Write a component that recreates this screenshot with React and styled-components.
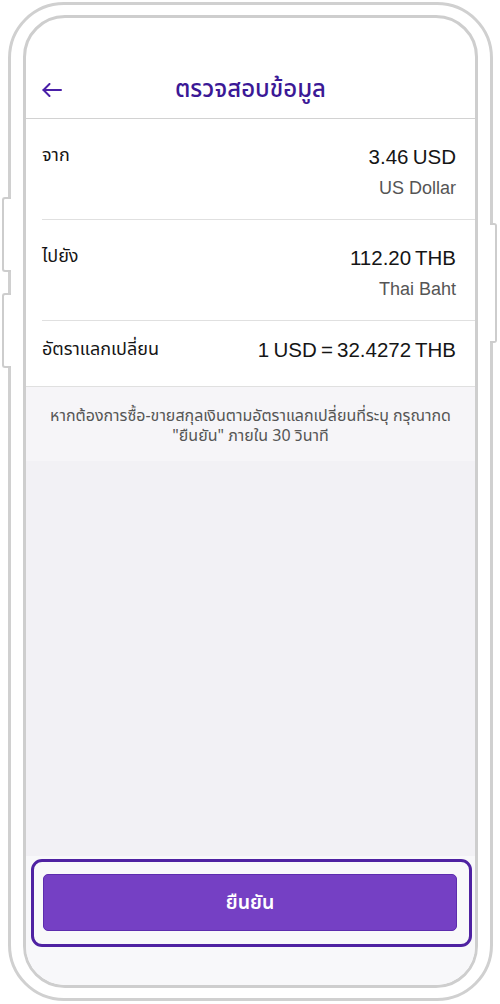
import React from 'react';
import styled, { createGlobalStyle } from 'styled-components';

const Global = createGlobalStyle`
  html, body { margin: 0; padding: 0; background: #fff; }
  body { font-family: "Noto Sans Thai", "Liberation Sans", "Noto Sans", sans-serif; }
  * { box-sizing: border-box; }
`;

const Device = styled.div`
  position: relative;
  width: 500px;
  height: 1004px;
  padding: 2px 7px 3px 8px;
`;

const Frame = styled.div`
  width: 485px;
  height: 999px;
  border: 3px solid #d0d0d0;
  border-radius: 56px;
  padding: 10px 12px 10px 12px;
  display: flex;
  background: #fff;
`;

const SideButton = styled.div`
  position: absolute;
  top: ${(p) => p.$top}px;
  height: ${(p) => p.$height}px;
  background: #fff;
  border: 2px solid #cdcdcd;
  ${(p) =>
    p.$right
      ? `left: 490px; width: 7px; border-left: none; border-radius: 0 3px 3px 0;`
      : `left: 2px; width: 9px; border-right: none; border-radius: 3px 0 0 3px;`}
`;

const Screen = styled.div`
  flex: 1;
  border: 3px solid #cecece;
  border-radius: 42px;
  overflow: hidden;
  display: flex;
  flex-direction: column;
  background: #fff;
`;

const Header = styled.header`
  height: 101px;
  display: grid;
  grid-template-columns: 1fr auto 1fr;
  align-items: end;
  padding: 0 16px 13px;
  border-bottom: 1px solid #d2d2d2;
`;

const BackButton = styled.button`
  justify-self: start;
  background: none;
  border: none;
  padding: 0;
  height: 30px;
  display: flex;
  align-items: center;
  color: #4a1fa8;
  cursor: pointer;
`;

const Title = styled.h1`
  margin: 0;
  font-size: 24px;
  line-height: 30px;
  font-weight: 500;
  color: #3b1896;
`;

const Row = styled.div`
  display: flex;
  justify-content: space-between;
  align-items: flex-start;
  margin-left: ${(p) => (p.$full ? 0 : 16)}px;
  padding: ${(p) => (p.$compact ? '16px 19px 23px 16px' : '25px 19px 19px 0')};
  border-bottom: 1px solid #e0e0e0;
`;

const Label = styled.div`
  font-size: 18px;
  line-height: 24px;
  color: #151515;
  padding-top: ${(p) => (p.$compact ? 1 : 0)}px;
`;

const ValueCol = styled.div`
  display: flex;
  flex-direction: column;
  align-items: flex-end;
  gap: 6px;
`;

const Value = styled.div`
  font-family: "Liberation Sans", Arial, sans-serif;
  font-size: 20.5px;
  word-spacing: -1.5px;
  line-height: 26px;
  color: #151515;
`;

const Sub = styled.div`
  font-family: "Liberation Sans", Arial, sans-serif;
  font-size: 18px;
  line-height: 24px;
  color: #555;
`;

const Note = styled.p`
  margin: 0;
  background: #f6f5f8;
  padding: 19px 14px 15px;
  font-size: 16px;
  line-height: 20px;
  color: #555;
  text-align: center;
`;

const Filler = styled.div`
  flex: 1;
  background: #f2f1f5;
`;

const Footer = styled.footer`
  background: #f8f8fa;
  padding: 3px 3px 38px 5px;
`;

const FocusRing = styled.div`
  border: 3px solid #4f22a2;
  border-radius: 11px;
  padding: 12px 12px 13px 9px;
`;

const ConfirmButton = styled.button`
  width: 100%;
  height: 57px;
  background: #7540c4;
  border: 1px solid #5d2cae;
  border-radius: 5px;
  color: #fff;
  font-family: inherit;
  font-size: 19.5px;
  font-weight: 600;
  cursor: pointer;
`;

const ArrowIcon = () => (
  <svg width="20" height="14" viewBox="0 0 20 14" fill="none" stroke="currentColor" strokeWidth="2" strokeLinecap="round" strokeLinejoin="round">
    <path d="M19 7H1.5" />
    <path d="M7.5 1L1.5 7l6 6" />
  </svg>
);

export default function App() {
  return (
    <>
      <Global />
      <Device>
        <SideButton $top={197} $height={75} />
        <SideButton $top={293} $height={75} />
        <SideButton $right $top={223} $height={120} />
        <Frame>
          <Screen>
            <Header>
              <BackButton aria-label="back">
                <ArrowIcon />
              </BackButton>
              <Title>ตรวจสอบข้อมูล</Title>
              <span />
            </Header>
            <Row>
              <Label>จาก</Label>
              <ValueCol>
                <Value>3.46 USD</Value>
                <Sub>US Dollar</Sub>
              </ValueCol>
            </Row>
            <Row>
              <Label>ไปยัง</Label>
              <ValueCol>
                <Value>112.20 THB</Value>
                <Sub>Thai Baht</Sub>
              </ValueCol>
            </Row>
            <Row $full $compact>
              <Label $compact>อัตราแลกเปลี่ยน</Label>
              <Value>1 USD = 32.4272 THB</Value>
            </Row>
            <Note>
              หากต้องการซื้อ-ขายสกุลเงินตามอัตราแลกเปลี่ยนที่ระบุ กรุณากด
              <br />
              "ยืนยัน" ภายใน 30 วินาที
            </Note>
            <Filler />
            <Footer>
              <FocusRing>
                <ConfirmButton>ยืนยัน</ConfirmButton>
              </FocusRing>
            </Footer>
          </Screen>
        </Frame>
      </Device>
    </>
  );
}
